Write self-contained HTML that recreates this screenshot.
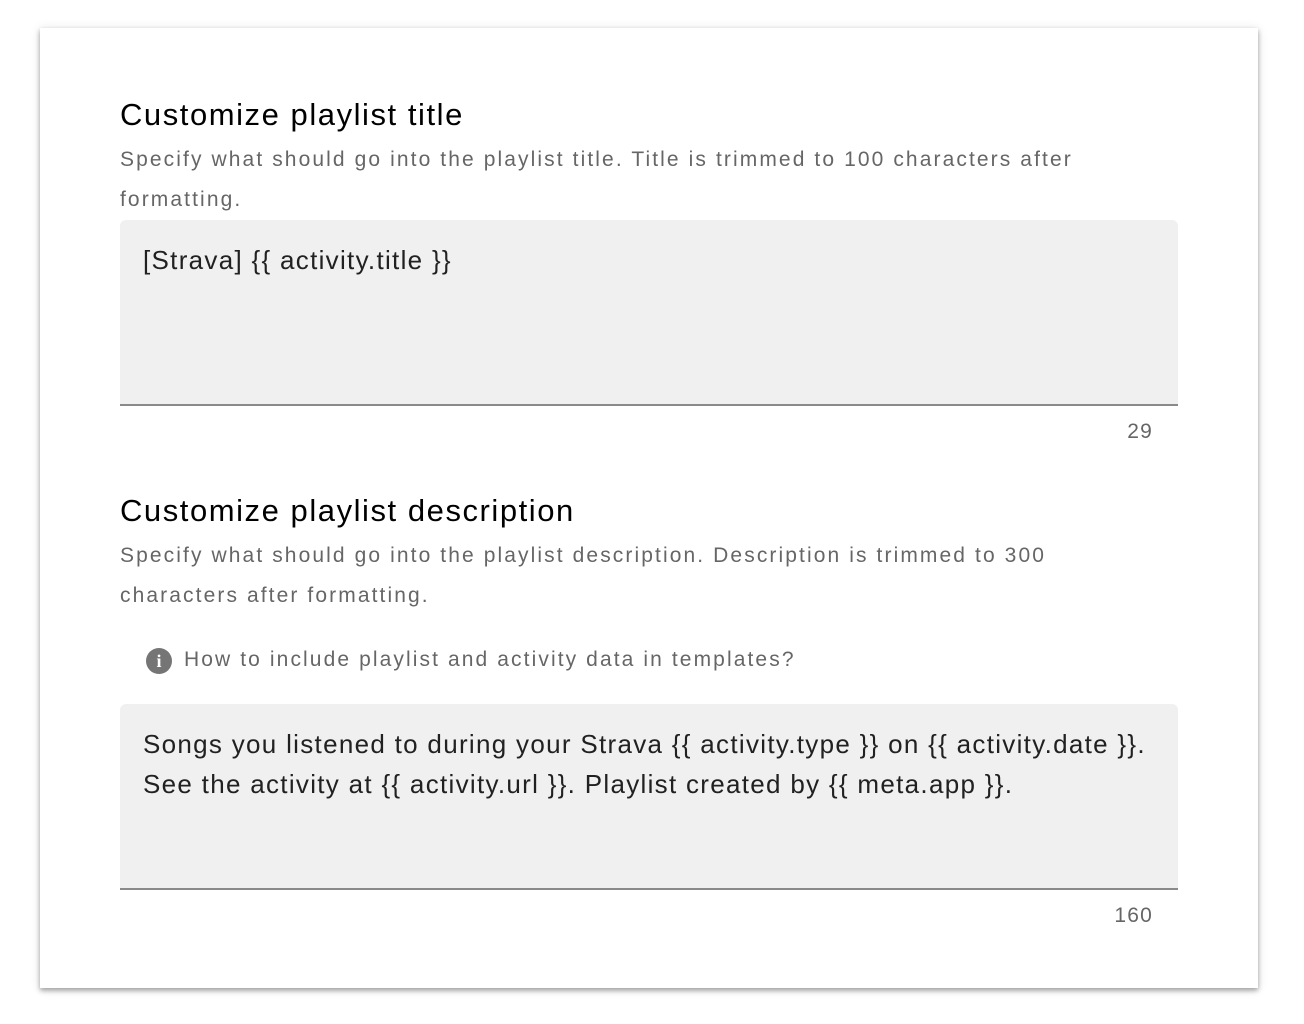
<!DOCTYPE html>
<html><head><meta charset="utf-8"><style>
html,body{margin:0;padding:0;background:#fff;width:1304px;height:1024px;overflow:hidden;font-family:"Liberation Sans",Roboto,sans-serif;}
.card{position:absolute;left:40px;top:28px;width:1218px;height:960px;background:#fff;box-shadow:0 3px 5px rgba(0,0,0,.2),0 1px 10px rgba(0,0,0,.12),0 2px 4px rgba(0,0,0,.14);}
.h{position:absolute;left:120px;font-size:31px;color:#000;letter-spacing:1.55px;line-height:40px;white-space:nowrap;}
.d{position:absolute;left:120px;font-size:21px;color:#666;letter-spacing:2.1px;line-height:40px;white-space:nowrap;}
.ta{position:absolute;left:120px;width:1058px;background:#f0f0f0;border-radius:6px 6px 0 0;border-bottom:2px solid #8a8a8a;box-sizing:border-box;}
.ta div{position:absolute;left:23px;font-size:26px;color:#212121;line-height:40px;letter-spacing:1.3px;white-space:nowrap;}
.c{position:absolute;right:151px;font-size:21px;color:#666;letter-spacing:1.2px;}
.info{position:absolute;left:146px;top:648px;width:26px;height:26px;border-radius:50%;background:#757575;color:#fff;font-weight:bold;font-size:18px;text-align:center;line-height:27px;font-family:"Liberation Serif",serif;}
</style></head><body>
<div class="card"></div>
<div class="h" style="top:95px">Customize playlist title</div>
<div class="d" style="top:140px">Specify what should go into the playlist title. Title is trimmed to 100 characters after<br>formatting.</div>
<div class="ta" style="top:220px;height:186px"><div style="top:20px">[Strava] {{ activity.title }}</div></div>
<div class="c" style="top:420px">29</div>
<div class="h" style="top:491px">Customize playlist description</div>
<div class="d" style="top:536px">Specify what should go into the playlist description. Description is trimmed to 300<br>characters after formatting.</div>
<div class="info">i</div>
<div class="d" style="left:184px;top:640px;letter-spacing:2.1px">How to include playlist and activity data in templates?</div>
<div class="ta" style="top:704px;height:186px"><div style="top:20px">Songs you listened to during your Strava {{ activity.type }} on {{ activity.date }}.<br>See the activity at {{ activity.url }}. Playlist created by {{ meta.app }}.</div></div>
<div class="c" style="top:904px">160</div>
</body></html>
